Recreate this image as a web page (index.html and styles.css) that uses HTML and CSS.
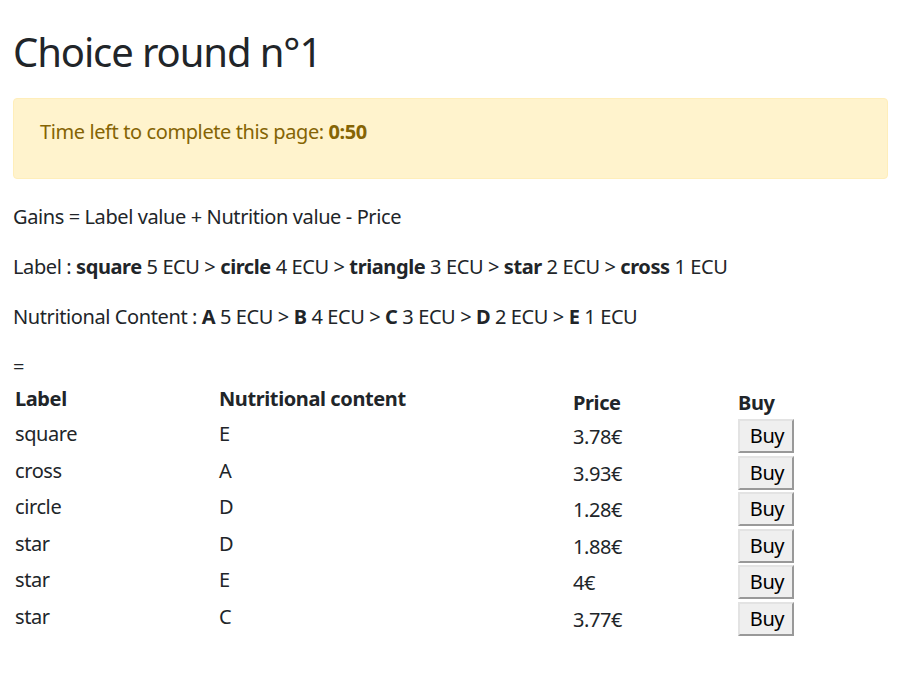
FILE: index.html
```html
<!DOCTYPE html>
<html>
<head>
<meta charset="utf-8">
<link rel="stylesheet" href="styles.css">
</head>
<body>
<div class="page">
  <h1 class="title">Choice round n°1</h1>
  <div class="alert">
    <p>Time left to complete this page: <b>0:50</b></p>
  </div>
  <p class="line">Gains = Label value + Nutrition value - Price</p>
  <p class="line">Label : <b>square</b> 5 ECU &gt; <b>circle</b> 4 ECU &gt; <b>triangle</b> 3 ECU &gt; <b>star</b> 2 ECU &gt; <b>cross</b> 1 ECU</p>
  <p class="line">Nutritional Content : <b>A</b> 5 ECU &gt; <b>B</b> 4 ECU &gt; <b>C</b> 3 ECU &gt; <b>D</b> 2 ECU &gt; <b>E</b> 1 ECU</p>
  <div class="eq">=</div>
  <table class="goods">
    <thead>
      <tr>
        <th class="c1">Label</th>
        <th class="c2">Nutritional content</th>
        <th class="c3 down">Price</th>
        <th class="c4 down">Buy</th>
      </tr>
    </thead>
    <tbody>
      <tr><td class="up">square</td><td class="up">E</td><td class="price">3.78€</td><td><button class="buy">Buy</button></td></tr>
      <tr><td class="up">cross</td><td class="up">A</td><td class="price">3.93€</td><td><button class="buy">Buy</button></td></tr>
      <tr><td class="up">circle</td><td class="up">D</td><td class="price">1.28€</td><td><button class="buy">Buy</button></td></tr>
      <tr><td class="up">star</td><td class="up">D</td><td class="price">1.88€</td><td><button class="buy">Buy</button></td></tr>
      <tr><td class="up">star</td><td class="up">E</td><td class="price">4€</td><td><button class="buy">Buy</button></td></tr>
      <tr><td class="up">star</td><td class="up">C</td><td class="price">3.77€</td><td><button class="buy">Buy</button></td></tr>
    </tbody>
  </table>
</div>
</body>
</html>
```

FILE: styles.css
```css
html, body {
  margin: 0;
  padding: 0;
  background: #ffffff;
}
body {
  font-family: "Noto Sans", "Open Sans", sans-serif;
  font-size: 20px;
  letter-spacing: -0.4px;
  line-height: 24px;
  color: #212529;
}
.page {
  padding: 28px 11px 20px 13px;
}
.title {
  margin: 0 0 22px 0;
  font-size: 40px;
  letter-spacing: -1.1px;
  line-height: 48px;
  font-weight: 400;
}
.alert {
  background: #fff3cd;
  border: 1px solid #ffeeba;
  border-radius: 4px;
  color: #856404;
  padding: 21px 26px 18px 26px;
  margin-bottom: 26px;
}
.alert p {
  margin: 0 0 16px 0;
}
.line {
  margin: 0 0 26px 0;
}
.eq {
  margin-top: 17px;
  line-height: 24px;
}
.goods {
  width: 875px;
  border-collapse: collapse;
}
.goods th, .goods td {
  padding: 0 2px;
  text-align: left;
  vertical-align: middle;
}
.goods th {
  font-weight: 700;
}
.goods thead tr {
  height: 39px;
}
.goods th.down {
  padding-top: 8px;
}
.goods tbody tr {
  height: 36.5px;
}
.goods td.up {
  padding-bottom: 4.5px;
}
.goods td.price {
  padding-top: 1.5px;
}
.c1 { width: 200px; }
.c2 { width: 350px; }
.c3 { width: 161px; }
.buy {
  font-family: "Noto Sans", "Open Sans", sans-serif;
  font-size: 20px;
  letter-spacing: -0.4px;
  line-height: 24px;
  color: #000;
  background: #efefef;
  border: 2px solid;
  border-color: #e3e3e3 #999999 #999999 #e3e3e3;
  padding: 2px 0 2px 2px;
  width: 56px;
  height: 34px;
  margin: 0;
  display: block;
}
```
